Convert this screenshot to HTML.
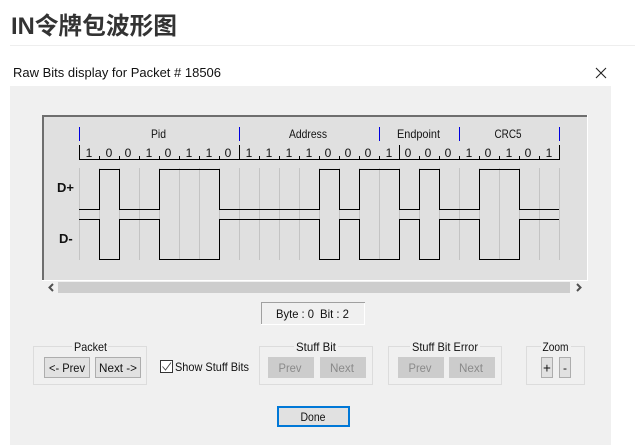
<!DOCTYPE html>
<html><head><meta charset="utf-8"><style>
html,body{margin:0;padding:0;background:#fff;width:635px;height:445px;overflow:hidden}
svg{display:block}
text{font-family:"Liberation Sans","Noto Sans CJK SC",sans-serif;font-size:12px;fill:#111}
</style></head><body>
<svg width="635" height="445" viewBox="0 0 635 445" xmlns="http://www.w3.org/2000/svg">
<rect width="635" height="445" fill="#fff"/>
<text x="11" y="34" style="font-size:24px;font-weight:bold;fill:#333" textLength="166" lengthAdjust="spacingAndGlyphs">IN令牌包波形图</text>
<rect x="10" y="45" width="625" height="1" fill="#eeeeee"/>
<text x="13" y="77" style="font-size:12.5px" textLength="208" lengthAdjust="spacingAndGlyphs">Raw Bits display for Packet # 18506</text>
<path d="M596 68L606 78M606 68L596 78" stroke="#222" stroke-width="1.1" fill="none"/>
<rect x="10" y="86" width="601" height="359" fill="#f0f0f0"/>

<!-- plot -->
<rect x="42" y="115" width="546" height="166" fill="#fff"/>
<rect x="42" y="115" width="545" height="165" fill="#e0e0e0"/>
<rect x="42" y="115" width="545" height="2" fill="#6e6e6e"/>
<rect x="42" y="115" width="2" height="165" fill="#6e6e6e"/>

<g stroke="#c4c4c4" stroke-width="1" shape-rendering="crispEdges">
<path d="M79.5 168V260M99.5 168V260M119.5 168V260M139.5 168V260M159.5 168V260M179.5 168V260M199.5 168V260M219.5 168V260M239.5 168V260M259.5 168V260M279.5 168V260M299.5 168V260M319.5 168V260M339.5 168V260M359.5 168V260M379.5 168V260M399.5 168V260M419.5 168V260M439.5 168V260M459.5 168V260M479.5 168V260M499.5 168V260M519.5 168V260M539.5 168V260M559.5 168V260"/>
</g>
<g fill="none" stroke="#000" stroke-width="1" shape-rendering="crispEdges">
<path d="M79 209.5H99.5V169.5H119.5V209.5H159.5V169.5H219.5V209.5H319.5V169.5H339.5V209.5H359.5V169.5H399.5V209.5H419.5V169.5H439.5V209.5H479.5V169.5H519.5V209.5H559"/>
<path d="M79 219.5H99.5V259.5H119.5V219.5H159.5V259.5H219.5V219.5H319.5V259.5H339.5V219.5H359.5V259.5H399.5V219.5H419.5V259.5H439.5V219.5H479.5V259.5H519.5V219.5H559"/>
<!-- ruler -->
<path d="M79 159.5H560M79.5 145V160M239.5 145V160M399.5 145V160M559.5 145V160"/>
<path d="M99.5 156V160M119.5 156V160M139.5 156V160M159.5 156V160M179.5 156V160M199.5 156V160M219.5 156V160M259.5 156V160M279.5 156V160M299.5 156V160M319.5 156V160M339.5 156V160M359.5 156V160M379.5 156V160M419.5 156V160M439.5 156V160M459.5 156V160M479.5 156V160M499.5 156V160M519.5 156V160M539.5 156V160"/>
</g>
<path d="M79.5 127V141M239.5 127V141M379.5 127V141M459.5 127V141M559.5 127V141" stroke="#0000e0" stroke-width="1" shape-rendering="crispEdges"/>

<g>
<text x="158.500" y="138" text-anchor="middle" textLength="15" lengthAdjust="spacingAndGlyphs">Pid</text>
<text x="308" y="138" text-anchor="middle" textLength="38" lengthAdjust="spacingAndGlyphs">Address</text>
<text x="418.500" y="138" text-anchor="middle" textLength="43" lengthAdjust="spacingAndGlyphs">Endpoint</text>
<text x="508" y="138" text-anchor="middle" textLength="27" lengthAdjust="spacingAndGlyphs">CRC5</text>
<text x="89" y="157" text-anchor="middle">1</text><text x="109" y="157" text-anchor="middle">0</text><text x="128" y="157" text-anchor="middle">0</text><text x="149" y="157" text-anchor="middle">1</text>
<text x="168" y="157" text-anchor="middle">0</text><text x="189" y="157" text-anchor="middle">1</text><text x="209" y="157" text-anchor="middle">1</text><text x="228" y="157" text-anchor="middle">0</text>
<text x="249" y="157" text-anchor="middle">1</text><text x="269" y="157" text-anchor="middle">1</text><text x="289" y="157" text-anchor="middle">1</text><text x="309" y="157" text-anchor="middle">1</text>
<text x="328" y="157" text-anchor="middle">0</text><text x="348" y="157" text-anchor="middle">0</text><text x="368" y="157" text-anchor="middle">0</text><text x="389" y="157" text-anchor="middle">1</text>
<text x="408" y="157" text-anchor="middle">0</text><text x="428" y="157" text-anchor="middle">0</text><text x="448" y="157" text-anchor="middle">0</text><text x="469" y="157" text-anchor="middle">1</text>
<text x="488" y="157" text-anchor="middle">0</text><text x="509" y="157" text-anchor="middle">1</text><text x="528" y="157" text-anchor="middle">0</text><text x="549" y="157" text-anchor="middle">1</text>
</g>
<text x="57" y="192" style="font-size:13px;font-weight:bold">D+</text>
<text x="59" y="243" style="font-size:13px;font-weight:bold">D-</text>

<!-- scrollbar -->
<rect x="58" y="282" width="512" height="11" fill="#cdcdcd"/>
<path d="M53 284L49.500 287.500L53 291" fill="none" stroke="#505050" stroke-width="2"/>
<path d="M577 284L580.500 287.500L577 291" fill="none" stroke="#505050" stroke-width="2"/>

<!-- byte box -->
<rect x="261" y="302" width="104" height="23" fill="#fff"/>
<rect x="262" y="303" width="102" height="21" fill="#f0f0f0"/>
<rect x="261" y="302" width="104" height="1" fill="#a0a0a0"/>
<rect x="261" y="302" width="1" height="22" fill="#a0a0a0"/>
<text x="276" y="318" textLength="38" lengthAdjust="spacingAndGlyphs">Byte : 0</text>
<text x="320" y="318" textLength="29" lengthAdjust="spacingAndGlyphs">Bit : 2</text>

<!-- group boxes -->
<g fill="none" stroke="#dcdcdc" shape-rendering="crispEdges">
<rect x="33.500" y="346.500" width="113" height="38"/>
<rect x="259.500" y="346.500" width="113" height="38"/>
<rect x="388.500" y="346.500" width="113" height="38"/>
<rect x="526.500" y="346.500" width="58" height="38"/>
</g>
<rect x="72" y="342" width="36" height="10" fill="#f0f0f0"/>
<rect x="294" y="342" width="44" height="10" fill="#f0f0f0"/>
<rect x="410" y="342" width="70" height="10" fill="#f0f0f0"/>
<rect x="541" y="342" width="30" height="10" fill="#f0f0f0"/>
<text x="90.500" y="351" text-anchor="middle" textLength="33" lengthAdjust="spacingAndGlyphs">Packet</text>
<text x="316" y="351" text-anchor="middle" textLength="40" lengthAdjust="spacingAndGlyphs">Stuff Bit</text>
<text x="445" y="351" text-anchor="middle" textLength="66" lengthAdjust="spacingAndGlyphs">Stuff Bit Error</text>
<text x="555.500" y="351" text-anchor="middle" textLength="26" lengthAdjust="spacingAndGlyphs">Zoom</text>

<!-- buttons -->
<g fill="#e1e1e1" stroke="#adadad" shape-rendering="crispEdges">
<rect x="44.500" y="357.500" width="45" height="20"/>
<rect x="95.500" y="357.500" width="45" height="20"/>
<rect x="541.500" y="357.500" width="11" height="20"/>
<rect x="559.500" y="357.500" width="11" height="20"/>
</g>
<g fill="#cccccc" shape-rendering="crispEdges">
<rect x="268" y="357" width="46" height="21"/>
<rect x="320" y="357" width="46" height="21"/>
<rect x="398" y="357" width="46" height="21"/>
<rect x="449" y="357" width="46" height="21"/>
</g>
<text x="67" y="372" text-anchor="middle" textLength="36" lengthAdjust="spacingAndGlyphs">&lt;- Prev</text>
<text x="118" y="372" text-anchor="middle" textLength="38" lengthAdjust="spacingAndGlyphs">Next -&gt;</text>
<text x="547" y="372.500" text-anchor="middle" style="font-size:13.500px">+</text>
<text x="565" y="372" text-anchor="middle" style="font-size:12px">-</text>
<g>
<text x="290" y="372" text-anchor="middle" textLength="23" lengthAdjust="spacingAndGlyphs" style="fill:#8a8a8a">Prev</text>
<text x="342" y="372" text-anchor="middle" textLength="24" lengthAdjust="spacingAndGlyphs" style="fill:#8a8a8a">Next</text>
<text x="420" y="372" text-anchor="middle" textLength="23" lengthAdjust="spacingAndGlyphs" style="fill:#8a8a8a">Prev</text>
<text x="471" y="372" text-anchor="middle" textLength="24" lengthAdjust="spacingAndGlyphs" style="fill:#8a8a8a">Next</text>
</g>

<!-- checkbox -->
<rect x="160.500" y="360.500" width="12" height="12" fill="#fff" stroke="#333" shape-rendering="crispEdges"/>
<path d="M162.500 366.500L165.500 370L171 362.500" fill="none" stroke="#444" stroke-width="0.9"/>
<text x="175" y="371" textLength="74" lengthAdjust="spacingAndGlyphs">Show Stuff Bits</text>

<!-- done -->
<rect x="278" y="407" width="71" height="19" fill="#e1e1e1" stroke="#0078d7" stroke-width="2"/>
<text x="313" y="421" text-anchor="middle" textLength="25" lengthAdjust="spacingAndGlyphs">Done</text>
</svg>
</body></html>
